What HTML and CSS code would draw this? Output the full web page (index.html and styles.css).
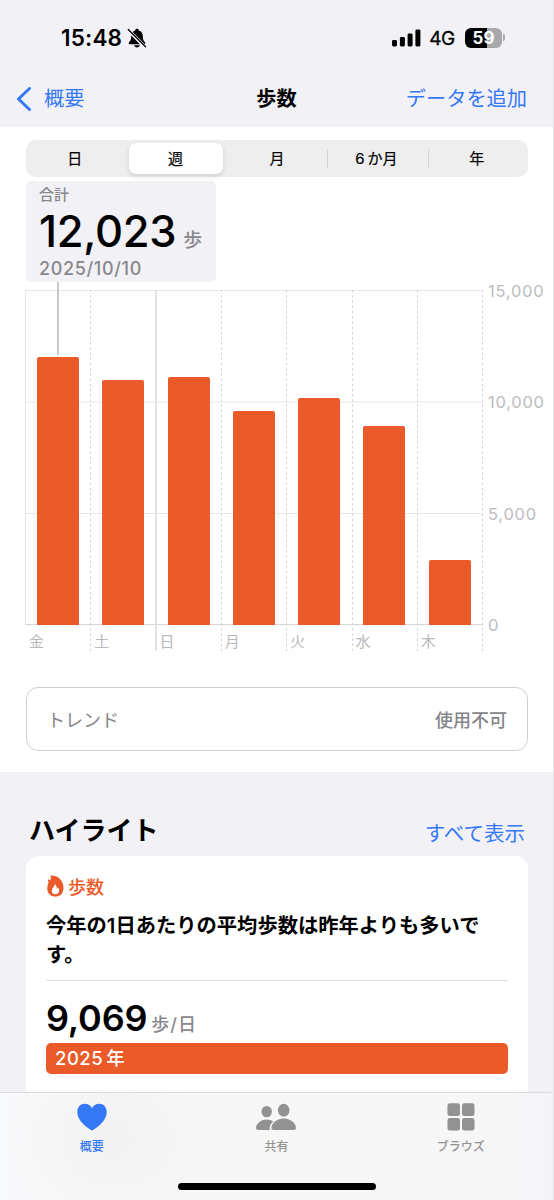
FILE: index.html
```html
<!DOCTYPE html>
<html lang="ja">
<head>
<meta charset="utf-8">
<title>歩数</title>
<link rel="stylesheet" href="styles.css">
</head>
<body>
<div class="phone">
  <header class="top">
    <div class="status">
      <div class="status-left">
        <span class="time">15:48</span>
        <svg class="bell" width="20" height="20" viewBox="0 0 20 20">
          <path d="M10 .8c-1 0-1.700.7-1.800 1.600C5.600 3.200 4.200 5.300 4.200 8c0 3.600-.6 4.700-2 6.100-.9.900-.6 2.100.6 2.100h14.400c1.200 0 1.500-1.200.6-2.100-1.400-1.400-2-2.500-2-6.100 0-2.700-1.400-4.800-4-5.600C11.700 1.500 11 .8 10 .8zM7.200 17.200h5.600c-.3 1.300-1.400 2.200-2.800 2.200s-2.500-.9-2.800-2.200z"/>
          <path d="M1 1.800 18.600 19.400" stroke="#f2f1f6" stroke-width="3.600"/>
          <path d="M1.300 1.500 18.600 18.800" stroke="#000" stroke-width="1.300" stroke-linecap="round"/>
        </svg>
      </div>
      <div class="status-right">
        <svg width="29" height="18" viewBox="0 0 29 18">
          <rect x="0" y="11" width="5" height="6.500" rx="1.400"/>
          <rect x="7.900" y="8" width="5" height="9.500" rx="1.400"/>
          <rect x="15.600" y="4.500" width="5" height="13" rx="1.400"/>
          <rect x="23.400" y=".5" width="5" height="17" rx="1.400"/>
        </svg>
        <span class="net">4G</span>
        <div class="battery"><span>59</span></div>
        <i class="battery-tip"></i>
      </div>
    </div>
    <nav class="nav">
      <a class="back"><svg width="16" height="26" viewBox="0 0 16 26"><path d="M13.500 2.500 2.500 13l11 10.500" fill="none" stroke="#3478f6" stroke-width="3" stroke-linecap="round" stroke-linejoin="round"/></svg><span>概要</span></a>
      <h1>歩数</h1>
      <a class="add">データを追加</a>
    </nav>
  </header>

  <main class="panel">
    <div class="segments">
      <span>日</span><span class="on">週</span><span>月</span><span class="split">6<b>か月</b></span><span class="split">年</span>
    </div>
    <section class="callout">
      <div class="caption">合計</div>
      <div class="total"><span>12,023</span><small>歩</small></div>
      <div class="date">2025/10/10</div>
    </section>
    <section class="chart">
      <div class="plot">
        <svg class="grid" width="459" height="361" viewBox="0 0 459 361">
          <g stroke="#e6e6e9"><path d="M0 .5H458M0 112H458M0 223.500H458"/><path d="M.5 0V334"/><path d="M0 334.500H458" stroke="#d5d5da"/></g>
          <path d="M131 0V361" stroke="#dcdcdf" stroke-width="1.600"/>
          <path d="M65.500 0V361M196.500 0V361M261.500 0V361M327.500 0V361M392.500 0V361M457.500 0V361" stroke="#d4d4d8" stroke-dasharray="2.600 2.600"/>
        </svg>
        <i class="stem"></i>
        <div class="bars">
          <div class="day"><i class="bar" style="height:267.500px"></i><span>金</span></div>
          <div class="day"><i class="bar" style="height:244.500px"></i><span>土</span></div>
          <div class="day"><i class="bar" style="height:248px"></i><span>日</span></div>
          <div class="day"><i class="bar" style="height:214px"></i><span>月</span></div>
          <div class="day"><i class="bar" style="height:227px"></i><span>火</span></div>
          <div class="day"><i class="bar" style="height:198.500px"></i><span>水</span></div>
          <div class="day"><i class="bar" style="height:64.500px"></i><span>木</span></div>
        </div>
      </div>
      <div class="scale"><span>15,000</span><span>10,000</span><span>5,000</span><span>0</span></div>
    </section>
    <section class="trend"><span>トレンド</span><strong>使用不可</strong></section>
  </main>

  <section class="highlights">
    <div class="heading"><h2>ハイライト</h2><a>すべて表示</a></div>
    <article class="card">
      <div class="kind">
        <svg width="17" height="22" viewBox="0 0 17 22"><path fill-rule="evenodd" d="M3.200.6C8.500-.2 13 2.700 15.200 7.200c1.200 2.400 1.500 4.900 1.200 7.200C15.800 18.700 12.700 21.500 8.400 21.500 3.700 21.500.3 18.200.3 13.700c0-2.600.6-4.300 1.200-6.200L.8 4.200l2.300 1.100C4.200 3.800 4.200 2 3.200.6zM7.800 8.900c.5 2.300-3 4.200-3 7 0 2 1.500 3.300 3.600 3.300s3.700-1.400 3.700-3.500c0-1.300-.5-2.500-1.300-3.200-.2.700-.5 1.100-1 1.400.2-2-.5-3.900-2-5z" fill="#eb5a29"/></svg>
        <span>歩数</span>
      </div>
      <p class="message">今年の1日あたりの平均歩数は昨年よりも多いです。</p>
      <div class="average"><span>9,069</span><small>歩/日</small></div>
      <div class="year">2025<span>年</span></div>
    </article>
  </section>

  <footer class="tabs">
    <div class="tab active">
      <svg width="30" height="28" viewBox="0 0 30 28"><path d="M15 27.500C11 25.500.3 18.300.3 9 .3 4.200 3.500.8 7.900.8c3.200 0 5.700 1.700 7.100 4.500C16.400 2.500 18.900.8 22.100.8c4.400 0 7.600 3.400 7.600 8.200 0 9.300-10.700 16.500-14.700 18.500z" fill="#3478f6"/></svg>
      <span>概要</span>
    </div>
    <div class="tab">
      <svg width="40" height="28" viewBox="0 0 40 28" fill="#929292"><ellipse cx="10.700" cy="8.600" rx="5.200" ry="5.700"/><path d="M2.200 27C.7 27 0 26.300 0 25c0-3.900 4.300-8.600 10.700-8.600 2.600 0 4.900.8 6.600 2-2.800 2.200-4.200 5.500-3.500 8.600z"/><ellipse cx="27.700" cy="7.200" rx="5.800" ry="6.400"/><path d="M17.700 27c-1.500 0-2.300-.7-2.300-2 0-4.100 4.800-9.400 12.300-9.400S40 20.900 40 25c0 1.300-.8 2-2.300 2z"/></svg>
      <span>共有</span>
    </div>
    <div class="tab">
      <svg width="28" height="28" viewBox="0 0 28 28" fill="#929292"><rect x=".5" y=".3" width="12.500" height="12.700" rx="2.300"/><rect x="15" y=".3" width="12.500" height="12.700" rx="2.300"/><rect x=".5" y="15" width="12.500" height="12.500" rx="2.300"/><rect x="15" y="15" width="12.500" height="12.500" rx="2.300"/></svg>
      <span>ブラウズ</span>
    </div>
    <i class="home"></i>
  </footer>
</div>
</body>
</html>
```
FILE: styles.css
```css
* { box-sizing: border-box; margin: 0; padding: 0; }
body { background: #f2f1f6; font-family: Inter, "Noto Sans CJK JP", sans-serif; color: #000; }
i, small, b { font-style: normal; font-weight: inherit; }
svg { display: block; flex: none; }
.phone { width: 554px; height: 1200px; overflow: hidden; display: flex; flex-direction: column; border-right: 1px solid #e4e3e9; }

.top { height: 126px; flex: none; border-bottom: 1px solid #e9e8ed; }
.status { height: 75px; padding: 1px 48px 0 61px; display: flex; justify-content: space-between; align-items: center; }
.status-left, .status-right { display: flex; align-items: center; }
.status-right { margin-top: -1px; }
.time { font-size: 22.500px; font-weight: 600; line-height: 28px; letter-spacing: .2px; }
.bell { margin-left: 5px; }
.net { font-size: 19px; line-height: 24px; margin-left: 8px; padding-top: 3px; letter-spacing: -.3px; -webkit-text-stroke: .3px #000; }
.battery { width: 37px; height: 20px; border-radius: 6px; margin-left: 10px; background: linear-gradient(90deg, #000 59%, #a9a9ac 59%); color: #fff; font-size: 17px; font-weight: 700; line-height: 20px; text-align: center; }
.battery-tip { width: 2px; height: 7px; margin-left: 1px; border-radius: 0 3px 3px 0; background: #a9a9ac; }
.nav { height: 48px; padding: 0 26px 0 16px; display: grid; grid-template-columns: 1fr auto 1fr; align-items: center; font-size: 20.200px; line-height: 30px; }
.back, .add { color: #3478f6; }
.back { display: flex; align-items: center; gap: 12px; }
.nav h1 { font-size: 20.200px; font-weight: 600; padding-left: 10px; }
.add { text-align: right; }

.panel { height: 646px; flex: none; padding: 14px 0 0 26px; background: #fff; }
.segments { width: 502px; height: 37px; padding: 3px 0; display: grid; grid-template-columns: repeat(5, 1fr); border-radius: 10px; background: #eeeeef; font-size: 15px; line-height: 31px; text-align: center; -webkit-text-stroke: .2px #000; }
.segments span:first-child { padding-right: 3px; }
.segments .on { margin: 0 4px 0 3px; padding-right: 1px; border-radius: 7px; background: #fff; box-shadow: 0 2px 5px rgba(0,0,0,.14); }
.segments .split { padding-right: 2px; background: linear-gradient(#d3d3d6, #d3d3d6) left center / 1px 19px no-repeat; }
.segments b { margin-left: 3px; }
.callout { width: 190px; height: 101px; margin-top: 4px; padding: 3px 13px 0; border-radius: 5px; background: #f2f1f6; color: #88888c; font-weight: 500; }
.caption { font-size: 15px; line-height: 22px; }
.total { height: 51px; display: flex; align-items: baseline; line-height: 51px; }
.total span { color: #000; font-size: 43.500px; letter-spacing: -.3px; }
.total small { margin-left: 7px; font-size: 19px; line-height: 20px; }
.date { font-size: 18px; line-height: 24px; letter-spacing: .65px; }
.chart { height: 361px; margin: 8px 0 0 -1px; display: flex; }
.plot { position: relative; width: 459px; }
.grid { position: absolute; left: 0; top: 0; }
.stem { position: absolute; left: 32px; top: -8px; width: 2px; height: 73px; background: #c9c9cc; }
.bars { position: relative; width: 457px; height: 361px; display: grid; grid-template-columns: repeat(7, 1fr); }
.day { height: 361px; padding-bottom: 2px; display: flex; flex-direction: column; justify-content: flex-end; }
.bar { width: 42px; margin-left: 12px; border-radius: 2px 2px 0 0; background: #eb5a29; }
.day span { height: 24.500px; margin-left: 4px; padding-top: 5px; font-size: 15px; line-height: 24px; color: #b9b9bd; }
.scale { height: 354px; margin: -9px 0 0 4px; display: flex; flex-direction: column; justify-content: space-between; color: #bcbcc0; font-size: 16.500px; line-height: 20px; letter-spacing: .75px; }
.trend { width: 502px; height: 64px; margin-top: 36px; padding: 0 20px; display: flex; justify-content: space-between; align-items: center; border: 1.500px solid #cfced6; border-radius: 12px; color: #858589; font-size: 18px; }
.trend strong { font-weight: 500; }

.highlights { flex: 1; padding: 39px 25px 0 26px; }
.heading { height: 45px; padding: 0 3px 0 3px; display: flex; justify-content: space-between; line-height: 40px; }
.heading h2 { font-size: 26px; font-weight: 600; }
.heading a { padding-top: 3px; font-size: 20.500px; color: #3478f6; }
.card { width: 502px; height: 260px; padding: 18px 20px 0; border-radius: 13px; background: #fff; }
.kind { display: flex; align-items: center; gap: 4px; height: 24px; color: #eb5a29; font-size: 18px; font-weight: 500; margin-left: 1px; }
.message { height: 70px; margin-top: 13px; padding-right: 20px; border-bottom: 1px solid #e0e0e3; font-size: 20.300px; font-weight: 600; line-height: 29px; }
.average { height: 62px; display: flex; align-items: baseline; line-height: 74px; }
.average span { font-size: 36px; font-weight: 600; letter-spacing: -.2px; }
.average small { margin-left: 4px; color: #88888c; font-size: 18px; font-weight: 500; letter-spacing: 1px; }
.year { height: 31px; padding-left: 9px; border-radius: 5px; background: #eb5a29; color: #fff; font-size: 18.500px; font-weight: 500; line-height: 30px; letter-spacing: .5px; }
.year span { margin-left: 3px; }

.tabs { position: absolute; left: 0; top: 1092px; width: 553px; height: 108px; padding-top: 10px; display: grid; grid-template-columns: repeat(3, 1fr); border-top: 1px solid #dcdcdf; background: radial-gradient(ellipse 100px 85px at 110px 45px, #f2f2f2, transparent), linear-gradient(90deg, #f8f9fb, #f7f7f7 30%, #f7f7f7 80%, #f5f5f8); }
.tab { display: flex; flex-direction: column; align-items: center; color: #929292; font-size: 12px; font-weight: 500; line-height: 18px; }
.tab span { margin-top: 7px; }
.active { color: #3478f6; padding-right: 1px; }
.home { position: absolute; left: 178px; bottom: 10px; width: 198px; height: 7px; border-radius: 4px; background: #000; }
```
